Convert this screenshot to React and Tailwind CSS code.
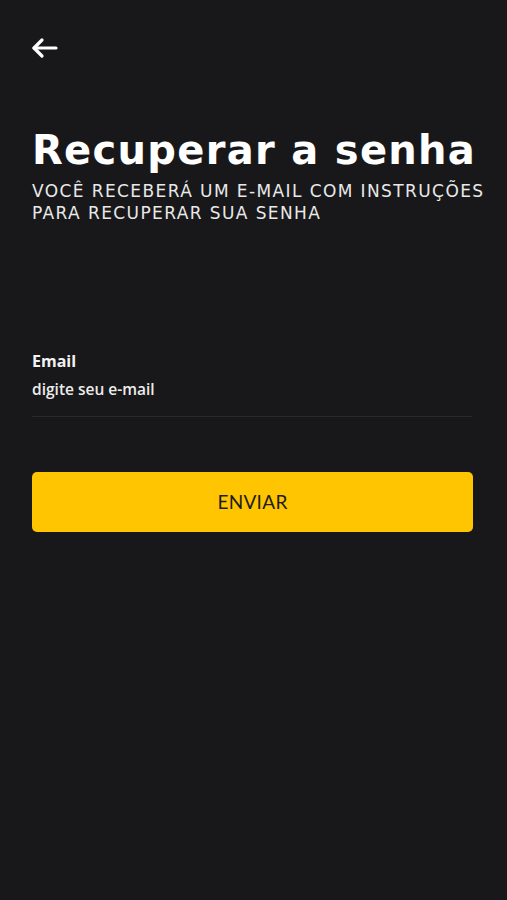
import React, { useState } from "react";

const App = () => {
  const [email, setEmail] = useState("");

  return (
    <div className="min-h-[900px] w-full bg-[#18181a] text-white px-8" style={{ fontFamily: "Lato, 'Open Sans', sans-serif" }}>
      <div className="pt-[36px]">
        <button className="block -ml-[3px] text-white">
          <svg width="32" height="24" viewBox="0 0 32 24" fill="none" stroke="currentColor" strokeWidth="3.2" strokeLinecap="round" strokeLinejoin="round">
            <path d="M27 12H5" />
            <path d="M13 4l-8 8 8 8" />
          </svg>
        </button>
      </div>

      <h1 className="mt-[66px] text-[40px] leading-[48px] font-bold tracking-[1.3px] whitespace-nowrap text-white" style={{ fontFamily: "'DejaVu Sans', sans-serif" }}>
        Recuperar a senha
      </h1>
      <p className="mt-[6px] text-[17px] leading-[22px] tracking-[1.4px] uppercase whitespace-nowrap text-[#e9e9e9]" style={{ fontFamily: "'DejaVu Sans', sans-serif" }}>
        Você receberá um e-mail com instruções
        <br />
        para recuperar sua senha
      </p>

      <div className="mt-[127px] pr-[3px]" style={{ fontFamily: "'Open Sans', sans-serif" }}>
        <label className="block text-[16px] font-bold text-[#f2f2f2] leading-[20px]">Email</label>
        <input
          value={email}
          onChange={(e) => setEmail(e.target.value)}
          placeholder="digite seu e-mail"
          className="mt-[8px] w-full bg-transparent text-[15.5px] font-semibold leading-[20px] text-white placeholder:text-[#ececec] outline-none pb-[17px] border-b border-[#2a2a2d]"
        />
      </div>

      <button className="mt-[55px] w-[441px] h-[60px] rounded-[5px] bg-[#ffc500] text-[#1d1d1d] text-[19px] tracking-[0.3px]">
        ENVIAR
      </button>
    </div>
  );
};

export default App;
